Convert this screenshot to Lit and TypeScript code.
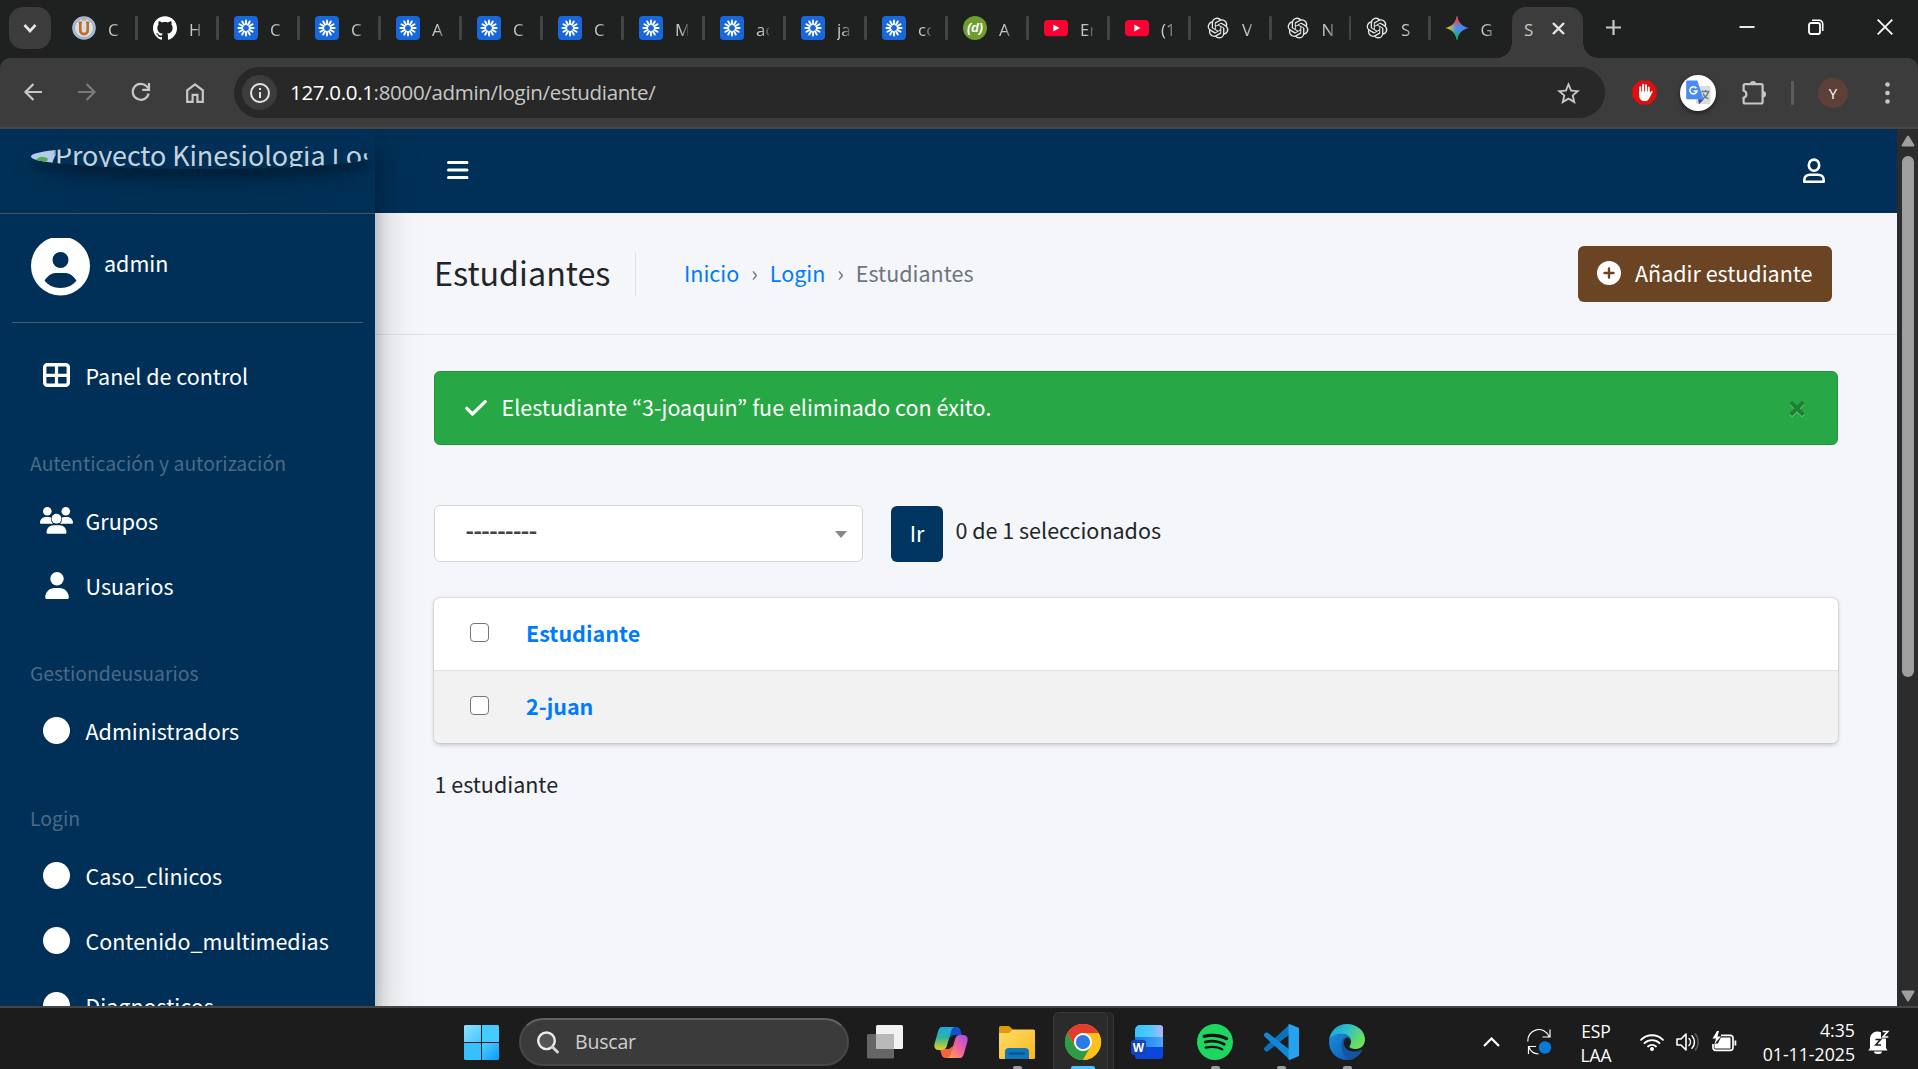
import { LitElement, html, svg, css, nothing } from "lit";
import type { SVGTemplateResult } from "lit";
import { customElement } from "lit/decorators.js";

const icon = (w: number, h: number, box: string, body: SVGTemplateResult) =>
  html`<svg class="ic" width=${w} height=${h} viewBox=${box} fill="none">${body}</svg>`;

const shared = css`
  * { box-sizing: border-box; }
  .ic { display: block; flex: none; overflow: visible; }
`;

/* ---------- favicons ---------- */
const burst = svg`
  <rect width="24" height="24" rx="4" fill="#1868db"/>
  <g stroke="#fff" stroke-width="1.9" stroke-linecap="round">
    ${[0, 30, 60, 90, 120, 150, 180, 210, 240, 270, 300, 330].map(
      (a) => svg`<path d="M12 8.3V4.4" transform="rotate(${a} 12 12)"/>`)}
  </g>`;
const university = svg`
  <circle cx="12" cy="12" r="11.8" fill="#a9bbd3"/>
  <circle cx="12" cy="12" r="9.6" fill="#d5deea" stroke="#8ca3c2" stroke-width=".8"/>
  <path d="M8.300 6.400v8a3.700 3.700 0 0 0 7.400 0v-8" stroke="#c8691f" stroke-width="2.600"/>
  <path d="M6.600 6.200h3.400M14 6.200h3.400" stroke="#c8691f" stroke-width="1.4"/>
  <path d="M10 4h4" stroke="#e2a04a" stroke-width="1.6"/>`;
const github = svg`<path fill="#fff" d="M12 .297c-6.63 0-12 5.373-12 12 0 5.303 3.438 9.8 8.205 11.385.6.113.82-.258.82-.577 0-.285-.01-1.04-.015-2.04-3.338.724-4.042-1.61-4.042-1.61C4.422 18.07 3.633 17.7 3.633 17.7c-1.087-.744.084-.729.084-.729 1.205.084 1.838 1.236 1.838 1.236 1.07 1.835 2.809 1.305 3.495.998.108-.776.417-1.305.76-1.605-2.665-.3-5.466-1.332-5.466-5.93 0-1.31.465-2.38 1.235-3.22-.135-.303-.54-1.523.105-3.176 0 0 1.005-.322 3.3 1.23.96-.267 1.98-.399 3-.405 1.02.006 2.04.138 3 .405 2.28-1.552 3.285-1.23 3.285-1.23.645 1.653.24 2.873.12 3.176.765.84 1.23 1.91 1.23 3.22 0 4.61-2.805 5.625-5.475 5.92.42.36.81 1.096.81 2.22 0 1.606-.015 2.896-.015 3.286 0 .315.21.69.825.57C20.565 22.092 24 17.592 24 12.297c0-6.627-5.373-12-12-12"/>`;
const aprender = svg`
  <circle cx="12" cy="12" r="12" fill="#6f9d2f"/>
  <text x="12" y="16.4" text-anchor="middle" font-family="Liberation Sans, sans-serif" font-size="12.5" font-weight="700" font-style="italic" fill="#fff">(d)</text>`;
const youtube = svg`
  <rect y="4" width="24" height="16.2" rx="4" fill="#ff0033"/>
  <path d="M9.3 8.6v7l6.2-3.5z" fill="#fff"/>`;
const openai = svg`<path fill="#e6e6e6" transform="translate(1.6 1.6) scale(.87)" d="M22.2819 9.8211a5.9847 5.9847 0 0 0-.5157-4.9108 6.0462 6.0462 0 0 0-6.5098-2.9A6.0651 6.0651 0 0 0 4.9807 4.1818a5.9847 5.9847 0 0 0-3.9977 2.9 6.0462 6.0462 0 0 0 .7427 7.0966 5.98 5.98 0 0 0 .511 4.9107 6.051 6.051 0 0 0 6.5146 2.9001A5.9847 5.9847 0 0 0 13.2599 24a6.0557 6.0557 0 0 0 5.7718-4.2058 5.9894 5.9894 0 0 0 3.9977-2.9001 6.0557 6.0557 0 0 0-.7475-7.0729zm-9.022 12.6081a4.4755 4.4755 0 0 1-2.8764-1.0408l.1419-.0804 4.7783-2.7582a.7948.7948 0 0 0 .3927-.6813v-6.7369l2.02 1.1686a.071.071 0 0 1 .038.052v5.5826a4.504 4.504 0 0 1-4.4945 4.4944zm-9.6607-4.1254a4.4708 4.4708 0 0 1-.5346-3.0137l.142.0852 4.783 2.7582a.7712.7712 0 0 0 .7806 0l5.8428-3.3685v2.3324a.0804.0804 0 0 1-.0332.0615L9.74 19.9502a4.4992 4.4992 0 0 1-6.1408-1.6464zM2.3408 7.8956a4.485 4.485 0 0 1 2.3655-1.9728V11.6a.7664.7664 0 0 0 .3879.6765l5.8144 3.3543-2.0201 1.1685a.0757.0757 0 0 1-.071 0l-4.8303-2.7865A4.504 4.504 0 0 1 2.3408 7.872zm16.5963 3.8558L13.1038 8.364 15.1192 7.2a.0757.0757 0 0 1 .071 0l4.8303 2.7913a4.4944 4.4944 0 0 1-.6765 8.1042v-5.6772a.79.79 0 0 0-.407-.667zm2.0107-3.0231l-.142-.0852-4.7735-2.7818a.7759.7759 0 0 0-.7854 0L9.409 9.2297V6.8974a.0662.0662 0 0 1 .0284-.0615l4.8303-2.7866a4.4992 4.4992 0 0 1 6.6802 4.66zM8.3065 12.863l-2.02-1.1638a.0804.0804 0 0 1-.038-.0567V6.0742a4.4992 4.4992 0 0 1 7.3757-3.4537l-.142.0805L8.704 5.459a.7948.7948 0 0 0-.3927.6813zm1.0976-2.3654l2.602-1.4998 2.6069 1.4998v2.9994l-2.5974 1.4997-2.6067-1.4997Z"/>`;
const gemini = svg`
  <defs>
    <linearGradient id="gA" x1="0" y1="12" x2="24" y2="12" gradientUnits="userSpaceOnUse">
      <stop offset=".05" stop-color="#fbbc04"/><stop offset=".25" stop-color="#c9b545"/><stop offset=".45" stop-color="#4b8cf5"/><stop offset="1" stop-color="#3b82f6"/>
    </linearGradient>
    <linearGradient id="gB" x1="12" y1="0" x2="12" y2="24" gradientUnits="userSpaceOnUse">
      <stop offset="0" stop-color="#f04a45"/><stop offset=".28" stop-color="#f04a45" stop-opacity=".85"/><stop offset=".45" stop-color="#4b8cf5" stop-opacity="0"/><stop offset=".65" stop-color="#16b364" stop-opacity=".3"/><stop offset=".9" stop-color="#16b364"/>
    </linearGradient>
  </defs>
  <path fill="url(#gA)" d="M12 -.5c1 7 5.500 11.500 12 12.500-6.500 1-11 5.500-12 12.500-1-7-5.500-11.500-12-12.500 6.500-1 11-5.500 12-12.500z"/>
  <path fill="url(#gB)" d="M12 -.5c1 7 5.500 11.500 12 12.500-6.500 1-11 5.500-12 12.500-1-7-5.500-11.500-12-12.500 6.500-1 11-5.500 12-12.500z"/>`;

interface Tab { glyph: SVGTemplateResult; label: string; narrow?: boolean; }
const TABS: Tab[] = [
  { glyph: university, label: "C" },
  { glyph: github, label: "H" },
  { glyph: burst, label: "C" },
  { glyph: burst, label: "C" },
  { glyph: burst, label: "A" },
  { glyph: burst, label: "C" },
  { glyph: burst, label: "C" },
  { glyph: burst, label: "M" },
  { glyph: burst, label: "ac" },
  { glyph: burst, label: "ja" },
  { glyph: burst, label: "co" },
  { glyph: aprender, label: "A" },
  { glyph: youtube, label: "En" },
  { glyph: youtube, label: "(1" },
  { glyph: openai, label: "V", narrow: true },
  { glyph: openai, label: "N", narrow: true },
  { glyph: openai, label: "S", narrow: true },
  { glyph: gemini, label: "G", narrow: true },
];

@customElement("browser-chrome")
export class BrowserChrome extends LitElement {
  static styles = [shared, css`
    :host { display: block; height: 129px; background: #1f2120; font-family: "Open Sans", "Noto Sans", sans-serif; color: #c7c7c7; }
    .strip { display: flex; height: 58px; }
    .search-tabs { width: 42px; height: 42px; margin: 7px 0 0 9px; border-radius: 14px; background: #3c3c3c; display: grid; place-items: center; }
    .tabs { display: flex; margin-left: 5px; }
    .tab { width: 81px; display: flex; align-items: center; padding: 0 0 2px 16px; }
    .tab.narrow { width: 79.500px; }
    .sep { width: 2.500px; height: 24px; background: #434444; border-radius: 1px; margin: 0 -4px 0 14px; flex: none; }
    .label { width: 13px; flex: none; margin-left: 12px; overflow: hidden; white-space: nowrap; font-size: 17px; line-height: 24px; padding-top: 6px; height: 32px;
      -webkit-mask-image: linear-gradient(90deg, #000 45%, rgba(0,0,0,.25)); mask-image: linear-gradient(90deg, #000 45%, rgba(0,0,0,.25)); }
    .active { width: 71px; height: 51px; margin: 7px 0 0 4px; border-radius: 14px 14px 0 0; background: #3c3c3c; display: flex; align-items: center; padding: 0 0 9px 12px; position: relative; }
    .active::before, .active::after { content: ""; position: absolute; bottom: 0; width: 15px; height: 15px; }
    .active::before { left: -15px; background: radial-gradient(circle at 0 0, transparent 14.5px, #3c3c3c 15px); }
    .active::after { right: -15px; background: radial-gradient(circle at 100% 0, transparent 14.5px, #3c3c3c 15px); }
    .active .name { font-size: 17px; line-height: 24px; padding-top: 3px; width: 28px; }
    .plus { margin: 20px 0 0 23px; }
    .win { margin-left: auto; display: flex; gap: 53px; padding: 19px 25px 0 0; }
    .bar { height: 71px; background: #3c3c3c; border-bottom: 2px solid #484644; border-radius: 10px 10px 0 0; display: flex; align-items: center; padding: 0 25px 0 24px; }
    .nav { display: flex; gap: 36px; width: 210px; }
    .omni { width: 1371px; height: 51px; border-radius: 26px; background: #282828; display: flex; align-items: center; padding: 0 25px 0 8px; }
    .info { width: 35px; height: 35px; border-radius: 50%; background: #3c3c3c; display: grid; place-items: center; }
    .url { margin-left: 13px; flex: 1; font-size: 20.500px; line-height: 30px; padding-bottom: 2px; letter-spacing: -.32px; }
    .url b { font-weight: 400; color: #fff; }
    .ext { display: flex; align-items: center; flex: 1; }
    .hand { margin-left: 27px; }
    .tr { width: 36px; height: 36px; margin-left: 23px; border-radius: 50%; background: #fff; display: grid; place-items: center; box-shadow: 0 2px 4px rgba(0,0,0,.5); }
    .puzzle { margin-left: 26px; }
    .div { width: 3px; height: 24px; margin-left: 24px; background: #5d5d5d; border-radius: 1px; }
    .me { width: 30px; height: 30px; margin-left: 24px; border-radius: 50%; background: #5d4037; color: #fff; font-size: 15px; line-height: 30px; text-align: center; }
    .dots { margin-left: auto; margin-right: 3px; }
  `];
  render() {
    return html`
      <div class="strip">
        <div class="search-tabs">${icon(14, 10, "0 0 14 10", svg`<path d="M1.500 2l5.500 6 5.500-6" stroke="#e6e6e6" stroke-width="2.600"/>`)}</div>
        <div class="tabs">
          ${TABS.map((t, i) => html`
            <div class="tab ${t.narrow ? "narrow" : ""}">
              ${icon(24, 24, "0 0 24 24", t.glyph)}
              <span class="label">${t.label}</span>
              ${i < TABS.length - 1 ? html`<span class="sep"></span>` : nothing}
            </div>`)}
        </div>
        <div class="active"><span class="name">S</span>
          ${icon(13, 13, "0 0 13 13", svg`<path d="M1 1l11 11M12 1L1 12" stroke="#e6e6e6" stroke-width="2.400"/>`)}
        </div>
        <div class="plus">${icon(15, 15, "0 0 15 15", svg`<path d="M7.500 0v15M0 7.500h15" stroke="#c7c7c7" stroke-width="2.200"/>`)}</div>
        <div class="win">
          ${icon(16, 16, "0 0 16 16", svg`<path d="M.5 8h15" stroke="#fff" stroke-width="1.800"/>`)}
          ${icon(16, 16, "0 0 16 16", svg`<rect x="1" y="4" width="11" height="11" rx="2" stroke="#fff" stroke-width="1.800"/><path d="M4 1.300h7.200a3.500 3.500 0 0 1 3.500 3.500V12" stroke="#fff" stroke-width="1.600"/>`)}
          ${icon(16, 16, "0 0 16 16", svg`<path d="M.7.7l14.600 14.600M15.300.7L.7 15.300" stroke="#fff" stroke-width="1.800"/>`)}
        </div>
      </div>
      <div class="bar">
        <div class="nav">
          ${icon(18, 18, "0 0 18 18", svg`<path d="M18 9H2M9.500 1L1.500 9l8 8" stroke="#c7c7c7" stroke-width="2.200"/>`)}
          ${icon(18, 18, "0 0 18 18", svg`<path d="M0 9h16M8.500 1l8 8-8 8" stroke="#7a7a7a" stroke-width="2.200"/>`)}
          ${icon(18, 18, "0 0 18 18", svg`<path d="M16.600 10.500A8 8 0 1 1 14.600 3.300L17 5.800" stroke="#c7c7c7" stroke-width="2.200"/><path d="M17 0v6.800h-6.800" stroke="#c7c7c7" stroke-width="2.200"/>`)}
          ${icon(18, 20, "0 0 18 20", svg`<path d="M1.200 18.900V7.400L9 1.400l7.800 6v11.500h-5.400v-7H6.600v7z" stroke="#c7c7c7" stroke-width="2.200"/>`)}
        </div>
        <div class="omni">
          <div class="info">${icon(20, 20, "0 0 20 20", svg`<circle cx="10" cy="10" r="9" stroke="#e3e3e3" stroke-width="2"/><path d="M10 9v6" stroke="#e3e3e3" stroke-width="2"/><path d="M10 5v2" stroke="#e3e3e3" stroke-width="2"/>`)}</div>
          <div class="url"><b>127.0.0.1</b>:8000/admin/login/estudiante/</div>
          ${icon(23, 22, "2 2 20 19", svg`<path fill="#c7c7c7" d="M22 9.240l-7.190-.620L12 2 9.190 8.630 2 9.240l5.460 4.730L5.820 21 12 17.270 18.180 21l-1.630-7.030L22 9.240zM12 15.400l-3.760 2.270 1-4.280-3.320-2.880 4.380-.380L12 6.100l1.710 4.040 4.380.380-3.320 2.880 1 4.280L12 15.400z"/>`)}
        </div>
        <div class="ext">
          <div class="hand">${icon(25, 25, "0 0 25 25", svg`
            <path d="M7.500.5h10l7 7v10l-7 7h-10l-7-7v-10z" fill="#e40d0d"/>
            <path d="M8.200 14V7.200M11.100 12.500V4.800M14 12.500V5.300M16.700 13.500V7.500" stroke="#fff" stroke-width="2" stroke-linecap="round"/>
            <path d="M7.200 11.500h10.500v1.500l1.700-2.100c.9-.6 1.600.2 1.200 1l-3.600 6.800c-.8 1.500-2 2.300-4 2.300-4 0-5.800-2-5.800-6z" fill="#fff"/>`)}</div>
          <div class="tr">${icon(25, 25, "0 0 25 25", svg`
            <rect x="10" y="6" width="14.500" height="18" rx="1.500" fill="#dcdcdc"/>
            <path d="M13 24.200l5-5h-6z" fill="#3949ab"/>
            <path d="M1.500.5h9.800l6.200 18.700h-16a1.300 1.300 0 0 1-1.300-1.300V1.800A1.300 1.300 0 0 1 1.500.5z" fill="#4a8af4"/>
            <path d="M15.500 11.500h8M19.500 10v1.500M22.300 11.500c-.6 3-3 6-5.500 7.200M17 13.500c1 2.500 3 4.500 5.500 5.500" stroke="#5f7d86" stroke-width="1.300"/>
            <path d="M10.400 8.200A3.600 3.600 0 1 0 11 11H7.700" stroke="#fff" stroke-width="1.600"/>`)}</div>
          <div class="puzzle">${icon(25, 25, "0 0 25 25", svg`
            <path d="M1.600 5.600a1.500 1.500 0 0 1 1.500-1.500h16a1.500 1.500 0 0 1 1.500 1.500v16.400a1.500 1.500 0 0 1-1.500 1.500h-16a1.500 1.500 0 0 1-1.500-1.500v-4.300a3.600 3.600 0 0 0 0-7z" stroke="#c7c7c7" stroke-width="2.200"/>
            <path d="M8 4.200a3.100 3.100 0 0 1 6.200 0zM20.800 11a3.200 3.200 0 0 1 0 6.400z" fill="#c7c7c7"/>`)}</div>
          <div class="div"></div>
          <div class="me">Y</div>
          <div class="dots">${icon(5, 24, "0 0 5 24", svg`<g fill="#c7c7c7"><circle cx="2.500" cy="3.500" r="2.300"/><circle cx="2.500" cy="12" r="2.300"/><circle cx="2.500" cy="20.500" r="2.300"/></g>`)}</div>
        </div>
      </div>`;
  }
}

/* ---------- sidebar ---------- */
const dot = icon(27, 27, "0 0 27 27", svg`<circle cx="13.500" cy="13.500" r="13.500" fill="#fff"/>`);
const panelIcon = icon(27, 24, "0 0 27 24", svg`<rect x="1.700" y="1.700" width="23.600" height="20.600" rx="2.500" stroke="#fff" stroke-width="3.400"/><path d="M13.500 2v20M2 12.300h23" stroke="#fff" stroke-width="3.200"/>`);
const personIcon = icon(24, 27, "0 0 448 512", svg`<circle cx="224" cy="128" r="128" fill="#fff"/><path fill="#fff" d="M178.300 304C79.800 304 0 383.800 0 482.300C0 498.700 13.300 512 29.700 512H418.300c16.400 0 29.700-13.300 29.700-29.700C448 383.800 368.200 304 269.700 304z"/>`);
const groupIcon = icon(33, 27, "0 0 33 27", svg`
  <g fill="#fff">
    <circle cx="7.300" cy="4.300" r="4.300"/><circle cx="25.800" cy="4.300" r="4.300"/>
    <path d="M0 16c0-3.500 2.500-6 6-6h2.500c1 0 1.800.2 2.600.6-.4 2.400.2 4.600 2 6.200H.9c-.5 0-.9-.3-.9-.8zM33 16c0-3.500-2.500-6-6-6h-2.500c-1 0-1.800.2-2.600.6.4 2.400-.2 4.600-2 6.200h12.200c.5 0 .9-.3.900-.8z"/>
    <circle cx="16.500" cy="11.700" r="4.900"/>
    <path d="M6.500 25.500c0-4 3-7.200 7-7.200h6c4 0 7 3.200 7 7.200 0 .8-.6 1.300-1.300 1.300H7.800c-.7 0-1.300-.5-1.300-1.300z"/>
  </g>`);

const GROUPS = [
  { title: "", items: [{ name: "Panel de control", glyph: panelIcon }] },
  { title: "Autenticación y autorización", items: [{ name: "Grupos", glyph: groupIcon }, { name: "Usuarios", glyph: personIcon }] },
  { title: "Gestiondeusuarios", items: [{ name: "Administradors", glyph: dot }] },
  { title: "Login", items: [{ name: "Caso_clinicos", glyph: dot }, { name: "Contenido_multimedias", glyph: dot }, { name: "Diagnosticos", glyph: dot }] },
];

@customElement("admin-sidebar")
export class AdminSidebar extends LitElement {
  static styles = [shared, css`
    :host { display: block; width: 375px; height: 877px; background: #003057; color: #fff; position: relative; z-index: 2;
      box-shadow: 0 21px 42px rgba(0,0,0,.25), 0 15px 15px rgba(0,0,0,.22); }
    .clip { height: 877px; overflow: hidden; }
    .brand { height: 85px; padding: 15px 0 0 31px; border-bottom: 1px solid #4b545c; }
    .alt { width: 340px; height: 24.500px; border-radius: 50%; overflow: hidden; display: flex; background: #003057;
      box-shadow: 0 15px 30px rgba(0,0,0,.19), 0 9px 9px rgba(0,0,0,.23); }
    .alt span { font-size: 26.900px; line-height: 22px; height: 22px; margin-left: -1px; white-space: nowrap; color: rgba(255,255,255,.8); letter-spacing: -.05px; }
    .user { margin: 0 12px; height: 109px; border-bottom: 1px solid #4f5962; display: flex; padding: 24px 0 0 19px; gap: 14px; }
    .user span { font-size: 21.500px; line-height: 34px; padding-top: 8px; }
    .title { margin-left: 30px; height: 43px; padding-top: 1px; font-size: 19.350px; line-height: 35px; color: #4b6a85; }
    .item { display: flex; align-items: center; height: 65px; }
    .glyph { width: 33px; margin-left: 40px; padding-bottom: 1px; display: grid; place-items: center; }
    .item span { margin-left: 12.500px; font-size: 21.500px; line-height: 34px; white-space: nowrap; }
    .group { padding-bottom: 37px; }
    .menu { padding-top: 20px; }
  `];
  render() {
    return html`<div class="clip">
      <div class="brand"><div class="alt">
        ${icon(25, 24, "0 0 25 24", svg`<rect width="24" height="24" fill="#b5c9ea"/><path d="M5 16c3-4 8-4 12-1l-4 9H0z" fill="#4caf50"/><path d="M24 12l-5 12h5z" fill="#003057"/><path d="M0 4.500h24V12" stroke="#9b9b9b" stroke-width="1.500"/>`)}
        <span>Proyecto Kinesiología Logo</span>
      </div></div>
      <div class="user">
        ${icon(59, 58, "0 0 59 58", svg`
          <path fill="#fff" fill-rule="evenodd" d="M20 0h19a29.500 29.500 0 0 1 20 28A29.500 29.500 0 0 1 0 28 29.500 29.500 0 0 1 20 0zM29.500 14a8 8 0 1 0 0 16 8 8 0 0 0 0-16zM13.500 42.500c3 4.500 9 7.500 16 7.500s13-3 16-7.500c-3-4.500-7-7.500-11-7.500h-10c-4 0-8 3-11 7.500z"/>`)}
        <span>admin</span>
      </div>
      <div class="menu">
        ${GROUPS.map((g) => html`<div class="group">
          ${g.title ? html`<div class="title">${g.title}</div>` : nothing}
          ${g.items.map((i) => html`<div class="item"><div class="glyph">${i.glyph}</div><span>${i.name}</span></div>`)}
        </div>`)}
      </div>
    </div>`;
  }
}

/* ---------- admin page ---------- */
const ROWS = ["Estudiante", "2-juan"];

@customElement("admin-content")
export class AdminContent extends LitElement {
  static styles = [shared, css`
    :host { display: block; width: 1522px; height: 877px; background: #f4f6f9; color: #212529; font-size: 21.500px; line-height: 36px; }
    .nav { height: 84px; background: #003057; display: flex; justify-content: space-between; padding: 31px 72px 0 72px; }
    .nav .ic:last-child { margin-top: -2px; }
    .head { height: 122px; border-bottom: 1px solid #dee2e6; display: flex; align-items: center; padding: 0 65px 0 59px; }
    h1 { margin: 0; font-size: 32.250px; font-weight: 400; line-height: 40px; padding-bottom: 4px; width: 202px; border-right: 1px solid #dee2e6; }
    .crumbs { flex: 1; display: flex; margin-left: 48px; padding-bottom: 2px; color: #6c757d; }
    .crumbs a { color: #007bff; }
    .crumbs i { font-style: normal; width: 30.500px; text-align: center; }
    .add { width: 254px; height: 56px; border-radius: 6px; background: #6b4423; color: #fff; display: flex; align-items: center; padding: 0 0 1px 19px; gap: 14px; white-space: nowrap; }
    .alert { margin: 36px 59px 0; height: 74px; border: 1px solid #23923d; border-radius: 6px; background: #28a745; color: #fff; display: flex; align-items: center; padding: 0 32px 0 30px; }
    .alert span { flex: 1; margin-left: 14.500px; padding-bottom: 2px; font-family: "Noto Sans CJK KR", "Open Sans", sans-serif; }
    .x { filter: drop-shadow(0 1.500px 0 rgba(255,255,255,.35)); }
    .actions { display: flex; margin: 60px 59px 0; height: 58px; }
    .select { width: 429px; height: 57px; border: 1px solid #ced4da; border-radius: 6px; background: #fff; color: #444; display: flex; align-items: center; justify-content: space-between; padding: 0 15px 0 31px; }
    .select .ic { margin-top: 2px; }
    .dash { letter-spacing: .45px; padding-bottom: 7px; -webkit-text-stroke: .8px #444; }
    .go { width: 52px; height: 56px; margin: 1px 0 0 28px; border-radius: 6px; background: #003562; color: #fff; text-align: center; line-height: 54px; }
    .count { margin-left: 12.500px; line-height: 50px; }
    .table { margin: 35px 59px 0; border-radius: 6px; overflow: hidden; background: #fff; box-shadow: 0 0 1.500px rgba(0,0,0,.225), 0 1.500px 4.500px rgba(0,0,0,.2); }
    .row { display: flex; align-items: center; height: 72px; color: #007bff; }
    .row b { font-weight: 700; padding-bottom: 2px; }
    .row:nth-child(2) { height: 73px; background: #f2f2f2; border-top: 1px solid #dee2e6; }
    .box { width: 19px; height: 19px; margin: 0 37px 4px 36px; border: 1.500px solid #767676; border-radius: 4px; background: #fff; }
    .total { margin: 23px 0 0 59.500px; }
  `];
  render() {
    return html`
      <div class="nav">
        ${icon(21, 20, "0 0 21 20", svg`<path d="M1.500 2.500h18.500M1.500 10h18.500M1.500 17.600h18.500" stroke="#fff" stroke-width="3" stroke-linecap="round"/>`)}
        ${icon(22, 26, "0 0 22 26", svg`<ellipse cx="11" cy="7.200" rx="5.200" ry="5.600" stroke="#fff" stroke-width="2.600"/><path d="M1.300 23.700v-1.600c0-3.600 2.600-5.400 5.700-5.400h8c3.100 0 5.700 1.800 5.700 5.400v1.600z" stroke="#fff" stroke-width="2.600" stroke-linejoin="round"/>`)}
      </div>
      <div class="head">
        <h1>Estudiantes</h1>
        <div class="crumbs"><a>Inicio</a><i>›</i><a>Login</a><i>›</i><span>Estudiantes</span></div>
        <div class="add">
          ${icon(24, 24, "0 0 24 24", svg`<circle cx="12" cy="12" r="12" fill="#fff"/><path d="M12 7.500v9M7.500 12h9" stroke="#6b4423" stroke-width="2.400" stroke-linecap="round"/>`)}
          <span>Añadir estudiante</span>
        </div>
      </div>
      <div class="alert">
        ${icon(22, 16, "0 0 22 16", svg`<path d="M1.800 8.300l5.700 5.700L20.200 1.600" stroke="#fff" stroke-width="3.200" stroke-linecap="round" stroke-linejoin="round"/>`)}
        <span>Elestudiante “3-joaquin” fue eliminado con éxito.</span>
        <div class="x">${icon(16, 15, "0 0 16 15", svg`<path d="M1.700 1.200l12.600 12.600M14.300 1.200L1.700 13.800" stroke="#1e8035" stroke-width="4"/>`)}</div>
      </div>
      <div class="actions">
        <div class="select"><span class="dash">---------</span>${icon(12, 7, "0 0 12 7", svg`<path d="M0 0h12L6 7z" fill="#888"/>`)}</div>
        <div class="go">Ir</div>
        <div class="count">0 de 1 seleccionados</div>
      </div>
      <div class="table">${ROWS.map((r) => html`<div class="row"><span class="box"></span><b>${r}</b></div>`)}</div>
      <div class="total">1 estudiante</div>`;
  }
}

/* ---------- taskbar ---------- */
const startIcon = icon(35, 35, "0 0 35 35", svg`
  <defs><linearGradient id="w" x1="0" y1="0" x2="1" y2="1" gradientUnits="objectBoundingBox"><stop stop-color="#8fe3ff"/><stop offset="1" stop-color="#45c6ff"/></linearGradient>
  <linearGradient id="w2" x1="0" y1="0" x2="1" y2="1"><stop stop-color="#4fd0ff"/><stop offset="1" stop-color="#0a9bff"/></linearGradient></defs>
  <path d="M1 0h16v17H0V1z" fill="url(#w)"/><path d="M18 0h16l1 1v16H18z" fill="#45cbff"/><path d="M0 18h17v17H1l-1-1z" fill="#38bfff"/><path d="M18 18h17v16l-1 1H18z" fill="url(#w2)"/>`);
const taskView = icon(36, 34, "0 0 36 34", svg`<rect x="9" y="0" width="27" height="24" rx="1.500" fill="#f2f2f2"/><rect x="0" y="9" width="27" height="24.500" rx="1.500" fill="#666"/><path d="M9 9h18v15H9z" fill="#b9b9b9"/>`);
const copilot = icon(34, 31, "0 0 34 31", svg`
  <defs>
    <linearGradient id="c1" x1="0" y1="0" x2="0" y2="1"><stop stop-color="#19a8e8"/><stop offset=".45" stop-color="#2fb3a0"/><stop offset="1" stop-color="#e8d31c"/></linearGradient>
    <linearGradient id="c2" x1="1" y1="0" x2="0" y2="1"><stop stop-color="#a04ef0"/><stop offset=".5" stop-color="#f2609a"/><stop offset="1" stop-color="#ffb14a"/></linearGradient>
  </defs>
  <path d="M17 0h5.500c2.200 0 3.400 1.400 4 3.200L28 8h-9l-4 3z" fill="#1550cf"/>
  <path d="M17 31h-5.500c-2.200 0-3.300-1.400-4-3.200L6 22h9l4-3z" fill="#f4643b"/>
  <path d="M8 0h13c-2 0-3 1.600-3.600 3.400L13 18.600C12.300 21 11 23 8 23H4.500C1 23-.3 20 .6 16.500L4 4.500C4.800 1.800 5.800 0 8 0z" fill="url(#c1)"/>
  <path d="M26 31H13c2 0 3-1.600 3.600-3.400L21 12.400C21.700 10 23 8 26 8h3.500c3.500 0 4.800 3 3.900 6.500l-3.400 12c-.8 2.700-1.800 4.500-4 4.500z" fill="url(#c2)"/>`);
const folder = icon(36, 33, "0 0 36 33", svg`
  <defs><linearGradient id="f" x1="0" y1="0" x2="1" y2="1"><stop stop-color="#ffdc6b"/><stop offset="1" stop-color="#f8b91b"/></linearGradient></defs>
  <path d="M0 1.500A1.500 1.500 0 0 1 1.500 0H10l5 4.500V8H0z" fill="#dd9c05"/><path d="M0 7h10l4-3.500h20.500A1.500 1.500 0 0 1 36 5v26.500a1.500 1.500 0 0 1-1.500 1.500H1.500A1.500 1.500 0 0 1 0 31.500z" fill="url(#f)"/>
  <path d="M6 33v-7a4 4 0 0 1 4-4h16a4 4 0 0 1 4 4v7z" fill="#0f75bd"/><path d="M11 27.500h14" stroke="#07508a" stroke-width="1.800" stroke-linecap="round"/>`);
const chrome = icon(36, 36, "0 0 48 48", svg`
  <circle cx="24" cy="24" r="24" fill="#fbbc05"/>
  <path d="M3.200 12A24 24 0 0 1 44.800 12H24a12 12 0 0 0-10.400 18z" fill="#e33b2e"/>
  <path d="M3.200 12A24 24 0 0 0 24 48l10.400-18A12 12 0 0 1 13.600 30z" fill="#2b9c48"/>
  <path d="M44.800 12A24 24 0 0 1 24 48l10.400-18A12 12 0 0 0 24 12z" fill="#fcc21b"/>
  <circle cx="24" cy="24" r="12" fill="#fff"/><circle cx="24" cy="24" r="9.500" fill="#2a7be8"/>`);
const word = icon(32, 34, "0 0 32 34", svg`
  <defs><linearGradient id="wd" x1="0" y1="0" x2="1" y2="0"><stop stop-color="#35c5fb"/><stop offset=".6" stop-color="#55c8ff"/><stop offset="1" stop-color="#b9b4f5"/></linearGradient>
  <linearGradient id="we" x1="0" y1="0" x2="1" y2="0"><stop stop-color="#0d7ce8"/><stop offset="1" stop-color="#4aa6fb"/></linearGradient></defs>
  <path d="M9 0h20a3 3 0 0 1 3 3v10H4V5a5 5 0 0 1 5-5z" fill="url(#wd)"/><path d="M4 12h28v11H4z" fill="url(#we)"/><path d="M4 22h28v9a3 3 0 0 1-3 3H7a3 3 0 0 1-3-3z" fill="#0b47da"/>
  <rect y="15" width="15" height="15" rx="3" fill="#1443b5"/>
  <text x="7.500" y="27" text-anchor="middle" font-family="Liberation Sans, sans-serif" font-size="12" font-weight="700" fill="#fff">W</text>`);
const spotify = icon(36, 36, "0 0 24 24", svg`<circle cx="12" cy="12" r="11.500" fill="#111"/><path fill="#1ed760" d="M12 0C5.400 0 0 5.400 0 12s5.400 12 12 12 12-5.400 12-12S18.660 0 12 0zm5.521 17.340c-.24.359-.66.48-1.021.24-2.820-1.740-6.360-2.101-10.561-1.141-.418.122-.779-.179-.899-.539-.12-.421.18-.78.54-.9 4.560-1.021 8.520-.6 11.640 1.320.42.18.479.659.301 1.020zm1.440-3.300c-.301.42-.841.6-1.262.3-3.239-1.980-8.159-2.580-11.939-1.380-.479.12-1.020-.12-1.140-.6-.12-.48.12-1.021.6-1.141C9.600 9.900 15 10.561 18.720 12.840c.361.181.54.78.241 1.200zm.12-3.360C15.240 8.400 8.820 8.160 5.160 9.301c-.6.179-1.200-.181-1.380-.721-.18-.601.18-1.200.72-1.381 4.260-1.260 11.280-1.020 15.721 1.621.539.3.719 1.020.419 1.560-.299.421-1.020.599-1.559.3z"/>`);
const vscode = icon(36, 36, "0 0 36 36", svg`
  <path d="M27 0L1 24l0 2 2 1.500h1.500L27 10z" fill="#0b72b8"/><path d="M27 36L1 12v-2l2-1.500h1.500L27 26z" fill="#1287d3"/>
  <path d="M26.500 0L36 4v28l-9.500 4c-.8 0-1-.3-1-1V1c0-.7.2-1 1-1z" fill="#27a2ef"/>`);
const edge = icon(36, 36, "0 0 36 36", svg`
  <defs>
    <linearGradient id="e1" x1="0" y1="0" x2="1" y2=".5"><stop stop-color="#1c9bd8"/><stop offset=".5" stop-color="#2cc0c8"/><stop offset="1" stop-color="#6fe05a"/></linearGradient>
    <linearGradient id="e2" x1="0" y1="0" x2="1" y2="1"><stop stop-color="#1b8ce0"/><stop offset="1" stop-color="#0a5cb0"/></linearGradient>
  </defs>
  <path d="M0 17C.5 7 8.500 0 18 0c10 0 18 7 18 15.500C36 21 32 25 27 25c-4 0-6.500-1.200-6.500-2.500 0-1 1.500-1.500 1.500-5 0-4-4-7.500-9-7.500C6 10 1 14 0 17z" fill="url(#e1)"/>
  <path d="M0 17C1.500 12.500 6.500 9.500 11.500 9.500c5.500 0 10.500 3.500 10.500 8 0-2.500-2-4-4-4-3 0-5 3-5 7C13 29 18 36 23 35.400 21.500 35.800 20 36 18 36 8 36 0 28 0 18z" fill="url(#e2)"/>
  <path d="M12.500 20.500c0-3.500 2-7 5.500-7-2 1-3.200 3-3.200 5.500 0 5 5 8.500 10.200 8.500 3 0 5.500-.8 7.500-1.800.6-.3 1 .2.600.8C30 31.500 26.500 35 22 35.600c-5.500 0-9.500-7.600-9.500-15.100z" fill="#1553a3"/>`);

const APPS = [
  { glyph: taskView, w: 36, left: 18, state: "" },
  { glyph: copilot, w: 34, left: 31, state: "" },
  { glyph: folder, w: 36, left: 31, state: "open" },
  { glyph: chrome, w: 36, left: 30, state: "active" },
  { glyph: word, w: 32, left: 30, state: "" },
  { glyph: spotify, w: 36, left: 34, state: "open" },
  { glyph: vscode, w: 36, left: 30, state: "open" },
  { glyph: edge, w: 36, left: 30, state: "open" },
];

@customElement("task-bar")
export class TaskBar extends LitElement {
  static styles = [shared, css`
    :host { display: flex; height: 63px; background: #1c1c1c; border-top: 2px solid #444546; color: #fff; padding-left: 464px; font-family: "Open Sans", "Noto Sans", sans-serif; }
    .start { margin-top: 17px; }
    .search { width: 330px; height: 48px; margin: 10px 0 0 20px; border-radius: 24px; border: 2px solid #484848; border-top-color: #616161; background: #3b3b3b; display: flex; align-items: center; padding-left: 16px; gap: 16px; font-size: 19.500px; letter-spacing: -.2px; line-height: 26px; color: #cfcfcf; }
    .app { height: 61px; display: grid; place-items: center; padding-top: 7px; position: relative; }
    .app .ic { position: relative; }
    .open::after, .active::after { content: ""; position: absolute; bottom: 0; left: 50%; margin-left: -4.500px; width: 9px; height: 3px; border-radius: 2px 2px 0 0; background: #9a9a9a; }
    .active::after { width: 24px; margin-left: -12px; background: #4cc2ff; }
    .active::before { content: ""; position: absolute; left: -12px; top: 4px; width: 53px; height: 60px; border: 1.500px solid #393939; border-radius: 6px; background: #2b2b2b; box-shadow: 5px 0 0 0 #262626, 6px 0 0 0 #393939; }
    .tray { margin-left: auto; display: flex; align-items: center; padding: 6px 29px 0 0; font-size: 17.700px; line-height: 24px; }
    .lang { width: 34px; text-align: center; margin: 0 27px 0 28px; padding-top: 2px; font-size: 17.500px; letter-spacing: -.1px; }
    .status { display: flex; gap: 12px; align-items: center; }
    .clock { width: 97px; text-align: right; margin: 0 13px 0 21px; white-space: nowrap; }
    .sync { margin-left: 27px; }
  `];
  render() {
    return html`
      <div class="start">${startIcon}</div>
      <div class="search">${icon(22, 23, "0 0 22 23", svg`<circle cx="9.500" cy="9.800" r="8.300" stroke="#ececec" stroke-width="2.400" fill="#555"/><path d="M15.500 16l5 5" stroke="#d5d5d5" stroke-width="3" stroke-linecap="round"/>`)}<span>Buscar</span></div>
      ${APPS.map((a) => html`<div class="app ${a.state}" style="width:${a.w}px;margin-left:${a.left}px">${a.glyph}</div>`)}
      <div class="tray">
        ${icon(17, 10, "0 0 17 10", svg`<path d="M1 9l7.500-7.500L16 9" stroke="#fff" stroke-width="2.200"/>`)}
        <div class="sync">${icon(24, 26, "0 0 24 26", svg`<path d="M.8 12.500A11 11 0 0 1 22 7.500M23 .5V8h-7.500M11.500 25A11 11 0 0 1 1.800 18M1.500 25v-7.500H9" stroke="#fff" stroke-width="1.200"/><circle cx="18" cy="18.500" r="6.200" fill="#0a7ad8"/>`)}</div>
        <div class="lang">ESP<br>LAA</div>
        <div class="status">
          ${icon(24, 18, "0 0 24 18", svg`<g stroke="#fff" stroke-width="1.800" stroke-linecap="round"><path d="M1 6.800a15.600 15.600 0 0 1 22 0M4.500 10.200a10.700 10.700 0 0 1 15 0M8 13.500a5.800 5.800 0 0 1 8 0"/></g><circle cx="12" cy="16" r="2" fill="#fff"/>`)}
          ${icon(24, 20, "0 0 24 20", svg`<path d="M1 7h4l5-5v16l-5-5H1z" stroke="#fff" stroke-width="1.600" stroke-linejoin="round"/><path d="M13 6.500a5 5 0 0 1 0 7M16 3.800a9 9 0 0 1 0 12.400" stroke="#fff" stroke-width="1.500" stroke-linecap="round"/><path d="M19 1.500a13 13 0 0 1 0 17" stroke="#5a5a5a" stroke-width="1.500"/>`)}
          ${icon(25, 21, "0 0 25 21", svg`<path d="M9 4.300h9.500a2.500 2.500 0 0 1 2.500 2.500v10a2.500 2.500 0 0 1-2.500 2.500h-15A2.500 2.500 0 0 1 1 16.800V13" stroke="#fff" stroke-width="1.700"/><path d="M9.500 7.500h8v9h-14v-3l3 0z" fill="#fff" stroke="#fff" stroke-width="2"/><path d="M22.500 9.500h1.800v5h-1.800z" fill="#fff"/><path d="M5 0L.5 7.500H4L2.500 13 9 5.500H5.500L7 0z" fill="#fff"/>`)}
        </div>
        <div class="clock">4:35<br>01-11-2025</div>
        ${icon(21, 24, "0 0 21 24", svg`<path d="M2 18V9A7.500 7.500 0 0 1 13 2.300v6.200h5V18l1.500 2.500H.3z" fill="#fff"/><path d="M6 21.500h8a4 2.500 0 0 1-8 0z" fill="#fff"/><path d="M14.700 1.500h5L15 7h5.300" stroke="#fff" stroke-width="1.700"/><path d="M7.500 9.500h5L7.800 15h5.200" stroke="#1c1c1c" stroke-width="1.600"/>`)}
      </div>`;
  }
}

@customElement("app-root")
export class AppRoot extends LitElement {
  static styles = [shared, css`
    :host { display: block; width: 1918px; height: 1069px; overflow: hidden; font-family: "Noto Sans CJK SC", "Open Sans", sans-serif; }
    .page { display: flex; height: 877px; overflow: hidden; }
    .scroll { width: 21px; height: 877px; background: #2c2c2c; display: flex; flex-direction: column; align-items: center; justify-content: space-between; padding: 6px 0 4px; }
    .thumb { width: 12px; height: 521px; border-radius: 6px; background: #9f9f9f; margin: 9px 0 auto; }
  `];
  render() {
    return html`
      <browser-chrome></browser-chrome>
      <div class="page">
        <admin-sidebar></admin-sidebar>
        <admin-content></admin-content>
        <div class="scroll">
          ${icon(14, 12, "0 0 14 12", svg`<path d="M7 1.500l5.500 9h-11z" fill="#9f9f9f" stroke="#9f9f9f" stroke-width="2" stroke-linejoin="round"/>`)}
          <div class="thumb"></div>
          ${icon(14, 12, "0 0 14 12", svg`<path d="M7 10.500l5.500-9h-11z" fill="#9f9f9f" stroke="#9f9f9f" stroke-width="2" stroke-linejoin="round"/>`)}
        </div>
      </div>
      <task-bar></task-bar>`;
  }
}
